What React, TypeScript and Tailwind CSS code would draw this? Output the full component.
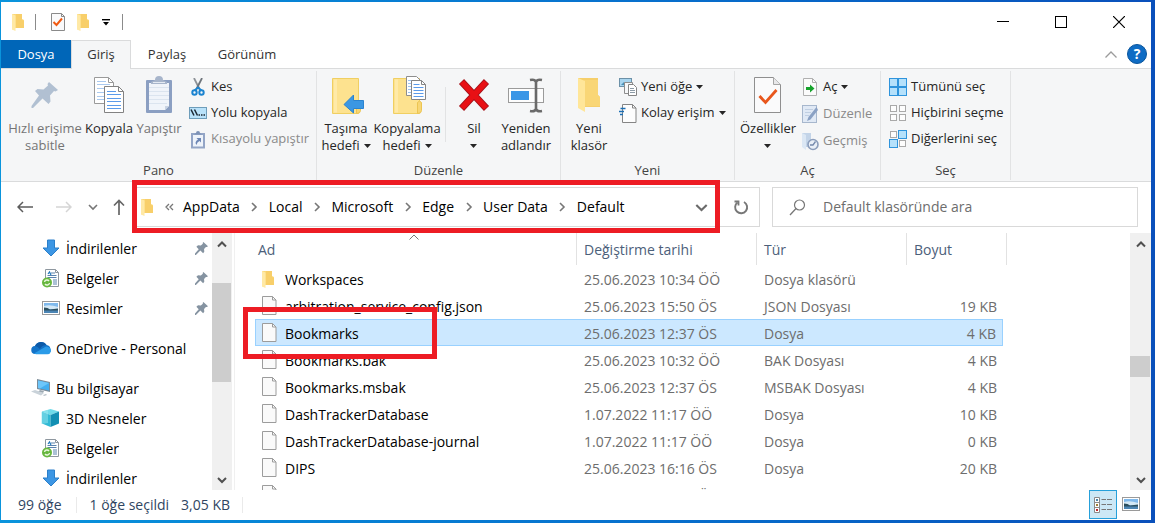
import React from "react";

type IconProps = { className?: string };

function FolderSmall({ className = "" }: IconProps) {
  return (
    <svg width="13" height="18" viewBox="0 0 13 18" className={className} aria-hidden="true">
      <path d="M0 1h7l3 .5V6l2 1v8H3.500L0 16.500z" fill="#fbd878" />
      <path d="M4 1h6v6l2 1v7H4z" fill="#f8cf6a" />
      <path d="M0 1l3.500 1.500V18L0 16.500z" fill="#ffe9a6" />
    </svg>
  );
}

function FolderOpen() {
  return (
    <svg width="24" height="36" viewBox="0 0 24 36" aria-hidden="true">
      <path d="M1 1h20v17l2 2v10H8l-7 1z" fill="#f6cf6b" />
      <path d="M7 3h14v15l2 2v9H7z" fill="#f9d676" />
      <path d="M1 1l7 3v31l-7-4z" fill="#ffe699" />
    </svg>
  );
}

function FolderClosed({ children }: { children: React.ReactNode }) {
  return (
    <svg width="40" height="40" viewBox="-4 0 40 40" aria-hidden="true">
      <path d="M2.500 3.500h26v35h-26z" fill="#fde28f" stroke="#f0cf62" />
      <path d="M4 4.500h3v33H4z" fill="#ffeaa8" />
      <path d="M26.500 38.500V27.500q2-3 4 0v8q0 3-4 3z" fill="#f7d676" stroke="#ecc552" />
      {children}
    </svg>
  );
}

function CheckDoc({ large = false }: { large?: boolean }) {
  if (large) {
    return (
      <svg width="30" height="38" viewBox="0 0 30 38" aria-hidden="true">
        <path d="M1.500 1.500h19l7 7v28h-26z" fill="#fafafb" stroke="#8f8f8f" />
        <path d="M20.500 1.500v7h7" fill="#e8e8ea" stroke="#a5a5a5" />
        <path d="M6.500 20l6 6.500L23.500 14" fill="none" stroke="#e8561c" strokeWidth="2.800" />
      </svg>
    );
  }
  return (
    <svg width="16" height="18" viewBox="0 0 16 18" aria-hidden="true">
      <path d="M1.500.5h10l3 3v14h-13z" fill="#fafafb" stroke="#8a8a8a" />
      <path d="M11.500.5v3h3" fill="none" stroke="#8a8a8a" />
      <path d="M3.500 9l3 3L12 5.500" fill="none" stroke="#f05a12" strokeWidth="2" />
    </svg>
  );
}

function Caret() {
  return (
    <svg width="7" height="4" viewBox="0 0 7 4" className="shrink-0" aria-hidden="true">
      <path d="M0 0h7L3.500 4z" fill="#262626" />
    </svg>
  );
}

function Chevron({ dir, size = 10, color = "#6b6b6b", weight = 1.6 }: { dir: "up" | "down" | "right"; size?: number; color?: string; weight?: number }) {
  const d = dir === "up" ? "M1 7.500l4-4 4 4" : dir === "down" ? "M1 3l4 4 4-4" : "M3 1l4 4-4 4";
  return (
    <svg width={size} height={size} viewBox="0 0 10 10" className="shrink-0" aria-hidden="true">
      <path d={d} fill="none" stroke={color} strokeWidth={weight} />
    </svg>
  );
}

function PinLarge() {
  return (
    <svg width="28" height="28" viewBox="0 0 28 28" aria-hidden="true">
      <path d="M18 1l9 8-2.500 1.500-1.500-.5-4 4.500.5 6-2 2.500-6-5.500L2 27H.5v-2L8 14.500 4 10l2.500-2 6 .5L17 4.500 16.500 3z" fill="#b1c0d2" />
    </svg>
  );
}

function PinSmall() {
  return (
    <svg width="13" height="13" viewBox="0 0 28 28" className="shrink-0" aria-hidden="true">
      <path d="M18 0l10 9-2.500 2-2-.5-4 4.500.5 6-2.500 3-6-5.500L2 28H0v-3l8-9.500L3 10l3.500-3 6 .5L17 4l-.5-2z" fill="#8593a1" />
    </svg>
  );
}

function CopyIcon() {
  return (
    <svg width="32" height="38" viewBox="0 0 32 38" aria-hidden="true">
      <path d="M1.500 1.500h14l5 5v21h-19z" fill="#fff" stroke="#9a9a9a" />
      <path d="M15.500 1.500v5h5" fill="none" stroke="#9a9a9a" />
      <path d="M4 5.500h9M4 8.500h13M4 12.500h14M4 16.500h14M4 20.500h14M4 23.500h14" stroke="#a9c9ef" />
      <path d="M11.500 10.500h14l5 5v21h-19z" fill="#fff" stroke="#828282" />
      <path d="M25.500 10.500v5h5" fill="none" stroke="#828282" />
      <path d="M14 15.500h9M14 18.500h14M14 22.500h14M14 25.500h14M14 29.500h14M14 32.500h14" stroke="#5b9bea" />
    </svg>
  );
}

function PasteIcon() {
  return (
    <svg width="28" height="38" viewBox="0 0 28 38" aria-hidden="true">
      <rect x="1" y="4" width="26" height="33" rx="1" fill="#8b9fc2" />
      <path d="M4 7h20v23l-4 4H4z" fill="#f0f4fa" />
      <path d="M4 11.500h20M4 15.500h20M4 19.500h20M4 23.500h20M4 27.500h18" stroke="#dbe4ef" />
      <path d="M20 34v-4h4z" fill="#c8d3e3" />
      <path d="M10 4a4 4 0 0 1 8 0l4 2v2H6V6z" fill="#a7b5cb" />
      <path d="M8 6.500h12" stroke="#e4eaf3" />
    </svg>
  );
}

function ScissorsIcon() {
  return (
    <svg width="18" height="18" viewBox="0 0 18 18" aria-hidden="true">
      <path d="M5 0l5.500 11" stroke="#8d9298" strokeWidth="1.800" />
      <path d="M13 0L7.500 11" stroke="#6f757c" strokeWidth="1.800" />
      <circle cx="5.500" cy="14.500" r="2.200" fill="none" stroke="#1c84d0" strokeWidth="2" />
      <circle cx="12.500" cy="14.500" r="2.200" fill="none" stroke="#1c84d0" strokeWidth="2" />
      <path d="M5.500 12.500L9 9.500l3.500 3" fill="none" stroke="#1c84d0" strokeWidth="2" />
    </svg>
  );
}

function PathIcon() {
  return (
    <svg width="18" height="12" viewBox="0 0 18 12" aria-hidden="true">
      <rect x=".5" y=".5" width="17" height="11" fill="#b9e2fa" stroke="#6e9dba" />
      <path d="M2 2.500l3 6M5.500 2.500l3 6" stroke="#1b2733" strokeWidth="1.500" />
      <path d="M9.500 8h1.500M12 8h1.500M14.500 8H16" stroke="#1b2733" strokeWidth="1.500" />
    </svg>
  );
}

function ShortcutIcon() {
  return (
    <svg width="16" height="19" viewBox="0 0 16 19" aria-hidden="true">
      <rect x="1" y="3" width="14" height="15.500" fill="#93a5c6" />
      <rect x="3" y="5" width="10" height="11.500" fill="#eef3fa" />
      <path d="M6 3a2 2 0 0 1 4 0l2 1.500H4z" fill="#7d92b6" />
      <path d="M6.500 8H11v4.500L9.500 11Q7 12 6.500 15 4 12 8 9.500z" fill="#6d87b5" />
    </svg>
  );
}

function DeleteIcon() {
  return (
    <svg width="32" height="34" viewBox="0 0 32 34" aria-hidden="true">
      <path d="M3.500 3.500l25 27M28.500 3.500l-25 27" stroke="#a5121a" strokeWidth="7" />
      <path d="M4 4l24 26M28 4L4 30" stroke="#e81014" strokeWidth="5.500" />
    </svg>
  );
}

function RenameIcon() {
  return (
    <svg width="38" height="38" viewBox="0 0 38 38" aria-hidden="true">
      <rect x="1.500" y="12.500" width="35" height="14" fill="#fdfdfd" stroke="#9b9b9b" />
      <rect x="4" y="15" width="18" height="9" fill="#3a96e6" />
      <path d="M23 4q5-1 6 2 1-3 6-2M23 35q5 1 6-2 1 3 6 2M29 5v29" fill="none" stroke="#6a6a6a" strokeWidth="2.600" />
    </svg>
  );
}

function NewItemIcon() {
  return (
    <svg width="18" height="18" viewBox="0 0 18 18" aria-hidden="true">
      <rect x=".5" y=".5" width="12" height="8" fill="#a8d5ef" stroke="#6c91a8" />
      <path d="M2 7l3-3 3 3z" fill="#4a90b6" />
      <path d="M5.500 4.500h8v11h-8z" fill="#f7f8f9" stroke="#8d8d8d" />
      <path d="M9.500 6.500h5l3 3v8h-8z" fill="#fff" stroke="#858585" />
      <path d="M11 10.500h4M11 12.500h5M11 14.500h5" stroke="#8d9ba6" />
    </svg>
  );
}

function EasyAccessIcon() {
  return (
    <svg width="18" height="19" viewBox="0 0 18 19" aria-hidden="true">
      <path d="M3.500.5h10l3.500 3.500v14.500H3.500z" fill="#fdfdfd" stroke="#858585" />
      <path d="M13.500.5V4H17" fill="none" stroke="#858585" />
      <path d="M1.500 4.500h5M0 7.500h5M1 10.500h3" stroke="#1c6fb5" strokeWidth="1.500" />
    </svg>
  );
}

function OpenIcon() {
  return (
    <svg width="16" height="18" viewBox="0 0 16 18" aria-hidden="true">
      <path d="M1.500.5h9l4 4v13h-13z" fill="#fbfbfb" stroke="#b0b0b0" />
      <path d="M10.500.5v4h4" fill="none" stroke="#b0b0b0" />
      <path d="M4 9h4V6.500l4.500 4L8 14.500V12H4z" fill="#16a32c" />
    </svg>
  );
}

function EditIcon() {
  return (
    <svg width="16" height="18" viewBox="0 0 16 18" aria-hidden="true">
      <rect x=".5" y=".5" width="14" height="17" fill="#e0e9f5" stroke="#a7b7cd" />
      <path d="M3 4.500h8M3 7.500h6M3 10.500h4" stroke="#c0cfe2" />
      <path d="M14.500 2L6.500 12 5 16l3.500-1.500L16 5z" fill="#8aa1c4" />
    </svg>
  );
}

function HistoryIcon() {
  return (
    <svg width="18" height="19" viewBox="0 0 18 19" aria-hidden="true">
      <path d="M1 1h9v14H4l-3-1z" fill="#c3d4e8" />
      <path d="M1 1l4 2v15l-4-3z" fill="#dbe7f4" />
      <circle cx="12" cy="12.500" r="5" fill="#e9eff7" stroke="#8b9dbb" strokeWidth="1.600" />
      <path d="M14.500 9.500L12 13H9" fill="none" stroke="#7489ac" strokeWidth="1.300" />
    </svg>
  );
}

function SelectIcon({ filled }: { filled: boolean[] }) {
  const cells = [[1, 1], [10, 1], [1, 10], [10, 10]];
  return (
    <svg width="18" height="18" viewBox="0 0 18 18" aria-hidden="true">
      {cells.map(([x, y], i) =>
        filled[i] ? (
          <rect key={i} x={x - 0.5} y={y - 0.5} width="8" height="8" fill="#b5e1fb" stroke="#2f94dc" />
        ) : (
          <rect key={i} x={x + 0.5} y={y + 0.5} width="6" height="6" fill="#fdfdfd" stroke="#a9a9a9" />
        ),
      )}
    </svg>
  );
}

function DownloadIcon() {
  return (
    <svg width="18" height="18" viewBox="0 0 18 18" aria-hidden="true">
      <path d="M5.500 1h7v8h4.500L9 17 1 9h4.500z" fill="#3c96e4" stroke="#2b7fca" />
    </svg>
  );
}

function DocumentsIcon() {
  return (
    <svg width="18" height="19" viewBox="0 0 18 19" aria-hidden="true">
      <path d="M3.500.5h10l3 3v14h-13z" fill="#fff" stroke="#8e979f" />
      <path d="M13.500.5v3h3" fill="none" stroke="#8e979f" />
      <path d="M9 4h4M5.500 6.500h9M5.500 8.500h9M11 11h4M11 13h4M11 15h4" stroke="#5a83ad" />
      <path d="M6 5l1.500-2L9 6" fill="none" stroke="#2378bd" strokeWidth="1.200" />
      <circle cx="5" cy="13.500" r="5" fill="#68b83f" />
      <path d="M2.500 13a2.500 2.500 0 0 1 4.500-1M7.500 14A2.500 2.500 0 0 1 3 15" fill="none" stroke="#eaf6df" strokeWidth="1.400" />
    </svg>
  );
}

function PicturesIcon() {
  return (
    <svg width="18" height="14" viewBox="0 0 18 14" aria-hidden="true">
      <rect x=".5" y=".5" width="17" height="13" fill="#fff" stroke="#9a9a9a" />
      <rect x="2" y="2" width="14" height="10" fill="#7fb9ec" />
      <path d="M2 5q6-2 14 1v2H2z" fill="#d3e8f6" />
      <path d="M2 6.500q4 0 6 2l8-1V10H2z" fill="#2c4f5e" />
      <path d="M2 9.500h14V12H2z" fill="#4b85b4" />
    </svg>
  );
}

function OneDriveIcon() {
  return (
    <svg width="21" height="14" viewBox="0 0 21 14" aria-hidden="true">
      <path d="M4.500 13a4 4 0 0 1-.5-8A6.500 6.500 0 0 1 15.500 4a4.600 4.600 0 0 1 .5 9z" fill="#1373c8" />
      <path d="M4 5a6.500 6.500 0 0 1 11.500-1Q11 4 9 8 6 5 4 5z" fill="#0d5aa8" />
      <path d="M3 12.500L15 5.500q5.500.5 5 5-1 3-4 2.800H5z" fill="#2b9be8" />
    </svg>
  );
}

function ComputerIcon() {
  return (
    <svg width="20" height="18" viewBox="0 0 20 18" aria-hidden="true">
      <path d="M6 0l13 3v10L6 10z" fill="#7b8b98" />
      <path d="M7 1.500l11 2.500v7.500L7 9z" fill="#43aef0" />
      <path d="M7 1.500l11 2.500-9 5.500L7 9z" fill="#6dc6fa" />
      <path d="M9 11l4 1-1 2-5-1z" fill="#9aa6af" />
      <path d="M0 12.500l4-1.500 9 3-3 2.500z" fill="#c9d2d9" />
      <path d="M12 16l3-1 1 1-3 1z" fill="#b8c1c9" />
    </svg>
  );
}

function CubeIcon() {
  return (
    <svg width="19" height="18" viewBox="0 0 19 18" aria-hidden="true">
      <path d="M9.500 0L18 2.500 9.500 6 1 2.500z" fill="#6fdbe9" />
      <path d="M1 2.500L9.500 6v12L1 14.500z" fill="#31b9d4" />
      <path d="M9.500 6L18 2.500v12L9.500 18z" fill="#128fb3" />
      <path d="M0 3l7-2v13l-7 1z" fill="#a4edf3" opacity=".45" />
    </svg>
  );
}

function FileIcon() {
  return (
    <svg width="15" height="19" viewBox="0 0 15 19" className="shrink-0" aria-hidden="true">
      <path d="M.5.5h10l3.500 3.500v14.500H.5z" fill="#fafafa" stroke="#9c9c9c" />
      <path d="M10.500.5V4H14" fill="none" stroke="#9c9c9c" />
    </svg>
  );
}

type BigProps = { icon: React.ReactNode; lines: string[]; width: string; caret?: boolean; disabled?: boolean };

function BigButton({ icon, lines, width, caret, disabled }: BigProps) {
  return (
    <button type="button" disabled={disabled} className={`flex shrink-0 flex-col items-center ${width} ${disabled ? "text-[#747474]" : "text-[#262626]"}`}>
      <span className="flex h-10 items-center justify-center">{icon}</span>
      <span className="mt-[5px] block whitespace-nowrap leading-[17px]">
        {lines.map((line, i) => (
          <span key={i} className="flex h-[17px] items-center justify-center gap-1">
            {line && <span>{line}</span>}
            {caret && i === lines.length - 1 && <Caret />}
          </span>
        ))}
      </span>
    </button>
  );
}

function SmallButton({ icon, label, caret, disabled }: { icon: React.ReactNode; label: string; caret?: boolean; disabled?: boolean }) {
  return (
    <button type="button" disabled={disabled} className={`flex h-[26px] items-center whitespace-nowrap ${disabled ? "text-[#8a8a8a]" : "text-[#262626]"}`}>
      <span className="mr-1 flex w-[18px] justify-center">{icon}</span>
      <span>{label}</span>
      {caret && <span className="ml-1 flex"><Caret /></span>}
    </button>
  );
}

function Group({ label, width, children }: { label: string; width: string; children: React.ReactNode }) {
  return (
    <section aria-label={label} className={`mb-px mt-[2px] flex shrink-0 flex-col justify-between border-r border-[#e2e3e4] ${width}`}>
      <div className="flex pt-1">{children}</div>
      <div className="h-5 text-center leading-5 text-[#444]">{label}</div>
    </section>
  );
}

function Ribbon() {
  return (
    <div className="flex h-[114px] shrink-0 overflow-hidden border-y border-[#dadbdc] bg-[#f5f6f7] text-[13px]">
      <Group label="Pano" width="w-[316px]">
        <BigButton icon={<PinLarge />} lines={["Hızlı erişime", "sabitle"]} width="ml-1 w-20" disabled />
        <BigButton icon={<CopyIcon />} lines={["Kopyala"]} width="w-12" />
        <BigButton icon={<PasteIcon />} lines={["Yapıştır"]} width="w-[52px]" disabled />
        <div className="-mt-px ml-1 flex flex-col">
          <SmallButton icon={<ScissorsIcon />} label="Kes" />
          <SmallButton icon={<PathIcon />} label="Yolu kopyala" />
          <SmallButton icon={<ShortcutIcon />} label="Kısayolu yapıştır" disabled />
        </div>
      </Group>
      <Group label="Düzenle" width="w-[244px]">
        <BigButton
          icon={<FolderClosed><path d="M14 29.500L23.500 20v5.500h10v8h-10V38z" fill="#3b97e3" stroke="#2b83cf" /></FolderClosed>}
          lines={["Taşıma", "hedefi"]}
          width="w-[58px]"
          caret
        />
        <BigButton
          icon={
            <FolderClosed>
              <path d="M15.500 1.500h10l4 4v15h-14z" fill="#fff" stroke="#8e8e8e" />
              <path d="M17 5.500h7M17 8.500h10M17 11.500h10M17 14.500h10M17 17.500h10" stroke="#9cc2ee" />
              <path d="M20.500 5.500h10l4 4v15h-14z" fill="#fff" stroke="#858585" />
              <path d="M30.500 5.500v4h4" fill="none" stroke="#858585" />
              <path d="M22.500 9.500h6M22.500 12.500h10M22.500 15.500h10M22.500 18.500h10M22.500 21.500h10" stroke="#5b9bea" />
            </FolderClosed>
          }
          lines={["Kopyalama", "hedefi"]}
          width="w-16"
          caret
        />
        <div className="ml-[6px] mt-3 h-[55px] w-px bg-[#e2e3e4]" />
        <BigButton icon={<DeleteIcon />} lines={["Sil", ""]} width="ml-1 w-12" caret />
        <BigButton icon={<RenameIcon />} lines={["Yeniden", "adlandır"]} width="w-14" />
      </Group>
      <Group label="Yeni" width="w-[174px]">
        <BigButton icon={<FolderOpen />} lines={["Yeni", "klasör"]} width="w-14" />
        <div className="-mt-px ml-[2px] flex flex-col">
          <SmallButton icon={<NewItemIcon />} label="Yeni öğe" caret />
          <SmallButton icon={<EasyAccessIcon />} label="Kolay erişim" caret />
        </div>
      </Group>
      <Group label="Aç" width="w-[146px]">
        <BigButton icon={<CheckDoc large />} lines={["Özellikler", ""]} width="w-[66px]" caret />
        <div className="-mt-px flex flex-col gap-px">
          <SmallButton icon={<OpenIcon />} label="Aç" caret />
          <SmallButton icon={<EditIcon />} label="Düzenle" disabled />
          <SmallButton icon={<HistoryIcon />} label="Geçmiş" disabled />
        </div>
      </Group>
      <Group label="Seç" width="w-[130px]">
        <div className="-mt-px ml-2 flex flex-col">
          <SmallButton icon={<SelectIcon filled={[true, true, true, true]} />} label="Tümünü seç" />
          <SmallButton icon={<SelectIcon filled={[false, false, false, false]} />} label="Hiçbirini seçme" />
          <SmallButton icon={<SelectIcon filled={[false, true, true, false]} />} label="Diğerlerini seç" />
        </div>
      </Group>
    </div>
  );
}

function TitleBar() {
  return (
    <header className="flex h-[38px] shrink-0 items-center pt-[2px]">
      <FolderSmall className="ml-[11px]" />
      <span className="ml-2.5 h-4 w-px bg-[#8b8b8b]" />
      <button type="button" aria-label="Özellikler" className="ml-[14px]"><CheckDoc /></button>
      <button type="button" aria-label="Yeni klasör" className="ml-[11px]"><FolderSmall /></button>
      <button type="button" aria-label="Özelleştir" className="ml-3">
        <svg width="8" height="7" viewBox="0 0 8 7" aria-hidden="true">
          <path d="M0 .7h8" stroke="#000" strokeWidth="1.400" />
          <path d="M1 3h6L4 6.500z" />
        </svg>
      </button>
      <span className="ml-3 h-4 w-px bg-[#8b8b8b]" />
      <div className="ml-auto mr-[3px] flex h-full">
        <button type="button" aria-label="Simge durumuna küçült" className="flex w-[58px] items-center justify-center">
          <svg width="12" height="12" viewBox="0 0 12 12" aria-hidden="true"><path d="M0 5.500h12" stroke="#000" /></svg>
        </button>
        <button type="button" aria-label="Ekranı kapla" className="flex w-[58px] items-center justify-center">
          <svg width="12" height="12" viewBox="0 0 12 12" aria-hidden="true"><rect x=".5" y=".5" width="11" height="11" fill="none" stroke="#000" /></svg>
        </button>
        <button type="button" aria-label="Kapat" className="flex w-[58px] items-center justify-center">
          <svg width="12" height="12" viewBox="0 0 12 12" aria-hidden="true"><path d="M0 0l12 12M12 0L0 12" stroke="#000" strokeWidth="1.200" /></svg>
        </button>
      </div>
    </header>
  );
}

function Tabs() {
  return (
    <nav className="relative z-10 -mb-px flex h-[29px] shrink-0 items-start text-[13px] text-[#333]">
      <button type="button" className="h-7 w-[70px] bg-[#0066b8] pt-px text-white">Dosya</button>
      <button type="button" className="h-[29px] w-[60px] border border-b-0 border-[#dadbdc] bg-[#f5f6f7]">Giriş</button>
      <button type="button" className="h-7 w-[72px] pt-px">Paylaş</button>
      <button type="button" className="h-7 w-[88px] pt-px">Görünüm</button>
      <button type="button" aria-label="Şeridi simge durumuna küçült" className="ml-auto flex h-7 w-6 items-center justify-center">
        <svg width="12" height="7" viewBox="0 0 12 7" aria-hidden="true"><path d="M.5 6.500L6 1l5.500 5.500" fill="none" stroke="#9b9b9b" strokeWidth="1.300" /></svg>
      </button>
      <button type="button" aria-label="Yardım" className="ml-1 mr-1 mt-1 flex size-5 items-center justify-center rounded-full border border-[#0a559c] bg-[#0f6cc4] text-sm font-bold leading-none text-white">
        ?
      </button>
    </nav>
  );
}

const crumbs = ["AppData", "Local", "Microsoft", "Edge", "User Data", "Default"];

function NavRow() {
  return (
    <div className="flex h-[51px] shrink-0 items-start pt-[5px] pr-[13px]">
      <div className="flex h-10 w-[133px] shrink-0 items-center">
        <button type="button" aria-label="Geri" className="ml-4">
          <svg width="16" height="12" viewBox="0 0 16 12" aria-hidden="true"><path d="M6 1L1 6l5 5M1 6h15" fill="none" stroke="#5c5c5c" strokeWidth="1.500" /></svg>
        </button>
        <button type="button" aria-label="İleri" className="ml-[23px]" disabled>
          <svg width="16" height="12" viewBox="0 0 16 12" aria-hidden="true"><path d="M10 1l5 5-5 5M15 6H0" fill="none" stroke="#d5d5d5" strokeWidth="1.500" /></svg>
        </button>
        <button type="button" aria-label="Son konumlar" className="ml-4"><Chevron dir="down" color="#777" /></button>
        <button type="button" aria-label="Yukarı" className="ml-[15px]">
          <svg width="12" height="16" viewBox="0 0 12 16" aria-hidden="true"><path d="M1 6.500l5-5 5 5M6 1.500V16" fill="none" stroke="#666" strokeWidth="1.700" /></svg>
        </button>
      </div>
      <div className="relative flex h-10 flex-1 items-center border border-[#d9d9d9] text-sm text-black">
        <FolderSmall className="ml-[6px] shrink-0" />
        <button type="button" aria-label="Önceki konumlar" className="ml-[11px] mr-[9px]">
          <svg width="9" height="8" viewBox="0 0 9 8" aria-hidden="true"><path d="M4 1L1 4l3 3M8 1L5 4l3 3" fill="none" stroke="#777" strokeWidth="1.300" /></svg>
        </button>
        {crumbs.map((crumb, i) => (
          <React.Fragment key={crumb}>
            {i > 0 && <span className="flex w-[29px] justify-center"><Chevron dir="right" color="#777" /></span>}
            <button type="button" className="whitespace-nowrap">{crumb}</button>
          </React.Fragment>
        ))}
        <button type="button" aria-label="Önceki konumları göster" className="ml-auto mr-2.5"><Chevron dir="down" size={13} /></button>
        <span className="pointer-events-none absolute -bottom-[7px] -left-[3px] -right-[2px] -top-[8px] z-20 border-[5px] border-[#ed1c24]" />
      </div>
      <button type="button" aria-label="Yenile" className="flex h-10 w-[41px] shrink-0 items-center justify-center border border-l-0 border-[#d9d9d9] pl-1">
        <svg width="16" height="16" viewBox="0 0 16 16" aria-hidden="true">
          <path d="M4.500 3.500A6 6 0 1 0 11 3" fill="none" stroke="#777" strokeWidth="1.900" />
          <path d="M1.500 2.500h4v4" fill="none" stroke="#777" strokeWidth="1.800" />
        </svg>
      </button>
      <label className="ml-3 flex h-10 w-[366px] shrink-0 items-center border border-[#d9d9d9] pl-4">
        <svg width="17" height="17" viewBox="0 0 17 17" className="shrink-0" aria-hidden="true">
          <circle cx="10.500" cy="6" r="5" fill="none" stroke="#777" strokeWidth="1.200" />
          <path d="M7 9.500L1 16" stroke="#777" strokeWidth="1.300" />
        </svg>
        <input type="text" aria-label="Default klasöründe ara" placeholder="Default klasöründe ara" className="ml-[17px] min-w-0 flex-1 bg-transparent text-sm outline-none placeholder:text-[#6d6d6d]" />
      </label>
    </div>
  );
}

function SideItem({ icon, label, root, pinned }: { icon: React.ReactNode; label: string; root?: boolean; pinned?: boolean }) {
  return (
    <a href="#" className={`flex h-[30px] shrink-0 items-center whitespace-nowrap pr-1 ${root ? "pl-[29px]" : "pl-10"}`}>
      <span className={`flex justify-center ${root ? "mr-1 w-[22px]" : "mr-[6px] w-[19px]"}`}>{icon}</span>
      <span className="pt-[2px]">{label}</span>
      {pinned && <span className="ml-auto"><PinSmall /></span>}
    </a>
  );
}

function ScrollBar({ thumb, width }: { thumb: string; width: string }) {
  return (
    <div className={`flex shrink-0 flex-col bg-[#f0f0f0] ${width}`}>
      <button type="button" aria-label="Yukarı kaydır" className="flex h-[21px] shrink-0 items-center justify-center"><Chevron dir="up" color="#505050" weight={2} /></button>
      <div className="relative min-h-0 flex-1"><div className={`absolute left-0 right-px bg-[#cdcdcd] ${thumb}`} /></div>
      <button type="button" aria-label="Aşağı kaydır" className="flex h-[21px] shrink-0 items-center justify-center"><Chevron dir="down" color="#505050" weight={2} /></button>
    </div>
  );
}

function Sidebar() {
  return (
    <aside className="flex shrink-0">
      <div className="flex w-[211px] flex-col overflow-hidden">
        <SideItem icon={<DownloadIcon />} label="İndirilenler" pinned />
        <SideItem icon={<DocumentsIcon />} label="Belgeler" pinned />
        <SideItem icon={<PicturesIcon />} label="Resimler" pinned />
        <div className="h-2.5 shrink-0" />
        <SideItem icon={<OneDriveIcon />} label="OneDrive - Personal" root />
        <div className="h-2.5 shrink-0" />
        <SideItem icon={<ComputerIcon />} label="Bu bilgisayar" root />
        <SideItem icon={<CubeIcon />} label="3D Nesneler" />
        <SideItem icon={<DocumentsIcon />} label="Belgeler" />
        <SideItem icon={<DownloadIcon />} label="İndirilenler" />
      </div>
      <ScrollBar thumb="top-[29px] h-[99px]" width="w-5" />
    </aside>
  );
}

type Row = { name: string; date: string; type: string; size: string; folder?: boolean; selected?: boolean };

const rows: Row[] = [
  { name: "Workspaces", date: "25.06.2023 10:34 ÖÖ", type: "Dosya klasörü", size: "", folder: true },
  { name: "arbitration_service_config.json", date: "25.06.2023 15:50 ÖS", type: "JSON Dosyası", size: "19 KB" },
  { name: "Bookmarks", date: "25.06.2023 12:37 ÖS", type: "Dosya", size: "4 KB", selected: true },
  { name: "Bookmarks.bak", date: "25.06.2023 10:32 ÖÖ", type: "BAK Dosyası", size: "4 KB" },
  { name: "Bookmarks.msbak", date: "25.06.2023 12:37 ÖS", type: "MSBAK Dosyası", size: "4 KB" },
  { name: "DashTrackerDatabase", date: "1.07.2022 11:17 ÖÖ", type: "Dosya", size: "10 KB" },
  { name: "DashTrackerDatabase-journal", date: "1.07.2022 11:17 ÖÖ", type: "Dosya", size: "0 KB" },
  { name: "DIPS", date: "25.06.2023 16:16 ÖS", type: "Dosya", size: "20 KB" },
  { name: "", date: "25.06.2023 16:16 ÖS", type: "", size: "" },
];

function FileList() {
  const head = "h-8 border-r border-[#e2e2e2] p-0 pt-[2px] text-left font-normal text-[#4c607a]";
  return (
    <div className="ml-[2px] min-w-0 flex-1 overflow-hidden border-l border-[#f0f0f0]">
      <table className="ml-5 w-[752px] table-fixed border-separate border-spacing-0">
        <colgroup>
          <col className="w-[322px]" />
          <col className="w-[180px]" />
          <col className="w-[150px]" />
          <col className="w-[96px]" />
          <col className="w-1" />
        </colgroup>
        <thead>
          <tr>
            <th scope="col" aria-sort="ascending" className={`relative ${head}`}>
              <span className="pl-[3px]">Ad</span>
              <svg width="10" height="6" viewBox="0 0 10 6" className="absolute left-1/2 top-px -ml-[7px]" aria-hidden="true"><path d="M.5 5.500L5 1l4.500 4.500" fill="none" stroke="#777" /></svg>
            </th>
            <th scope="col" className={head}><span className="pl-[7px]">Değiştirme tarihi</span></th>
            <th scope="col" className={head}><span className="pl-[7px]">Tür</span></th>
            <th scope="col" colSpan={2} className={head}><span className="pl-[7px]">Boyut</span></th>
          </tr>
        </thead>
        <tbody className="text-[#6d6d6d]">
          {rows.map((r, i) => {
            const cell = r.selected ? "border-y border-[#99d1ff] bg-[#cce8ff]" : "";
            return (
              <tr key={i} className="h-[27px]" aria-selected={r.selected}>
                <td className={`relative p-0 text-black ${cell} ${r.selected ? "border-l" : ""}`}>
                  <span className={`flex items-center whitespace-nowrap ${r.selected ? "pl-[6px]" : "pl-[7px]"}`}>
                    <span className="mr-2 flex h-5 w-[15px] shrink-0 items-center">{r.folder ? <FolderSmall /> : <FileIcon />}</span>
                    <span className="pt-[2px]">{r.name}</span>
                  </span>
                  {r.selected && <span className="pointer-events-none absolute -left-[13px] -top-[13px] z-20 h-[52px] w-[194px] border-[5px] border-[#ed1c24]" />}
                </td>
                <td className={`p-0 pl-[7px] pt-[2px] ${cell}`}>{r.date}</td>
                <td className={`p-0 pl-[7px] pt-[2px] ${cell}`}>{r.type}</td>
                <td className={`p-0 pr-[6px] pt-[2px] text-right ${cell} ${r.selected ? "border-r" : ""}`}>{r.size}</td>
                <td className="p-0" />
              </tr>
            );
          })}
        </tbody>
      </table>
    </div>
  );
}

function StatusBar() {
  return (
    <footer className="flex h-[30px] shrink-0 items-center whitespace-nowrap pl-[17px] text-sm text-[#2f4562]">
      <span>99 öğe</span>
      <span className="ml-[14px] mr-[13px] h-4 w-px bg-[#eaeaea]" />
      <span>1 öğe seçildi</span>
      <span className="ml-3">3,05 KB</span>
      <span className="ml-3 h-4 w-px bg-[#eaeaea]" />
      <div className="ml-auto mr-[11px] flex h-full items-start">
        <button type="button" aria-label="Ayrıntılar" aria-pressed="true" className="flex h-[29px] w-7 items-center justify-center border border-[#26a0da] bg-[#cce8f6]">
          <svg width="18" height="16" viewBox="0 0 18 16" aria-hidden="true">
            <path d="M.5.5h5v15h-5zM.5 5.500h5M.5 10.500h5" fill="#fff" stroke="#8a8a8a" />
            <path d="M2 2h2v2H2z" fill="#4b86ab" />
            <path d="M2 7h2v2H2z" fill="#a0813a" />
            <path d="M2 12h2v2H2z" fill="#c1272d" />
            <path d="M7.500 2.500h4.500M13 2.500h5M7.500 7.500h4.500M13 7.500h5M7.500 12.500h4.500M13 12.500h5" stroke="#777" />
          </svg>
        </button>
        <button type="button" aria-label="Büyük simgeler" className="ml-[5px] mt-[7px]"><PicturesIcon /></button>
      </div>
    </footer>
  );
}

export default function App() {
  return (
    <div className="flex h-screen flex-col bg-linear-to-r from-[#0a94dc] via-[#0874cf] to-[#0a50bb] pb-[3px] pl-px pr-1 pt-[2px] font-['Open_Sans','Noto_Sans',sans-serif]">
      <div className="flex min-h-0 flex-1 flex-col bg-white">
        <TitleBar />
        <Tabs />
        <Ribbon />
        <NavRow />
        <main className="flex min-h-0 flex-1 overflow-hidden text-sm text-black">
          <Sidebar />
          <FileList />
          <ScrollBar thumb="top-[102px] h-[21px]" width="w-[21px]" />
        </main>
        <StatusBar />
      </div>
    </div>
  );
}
